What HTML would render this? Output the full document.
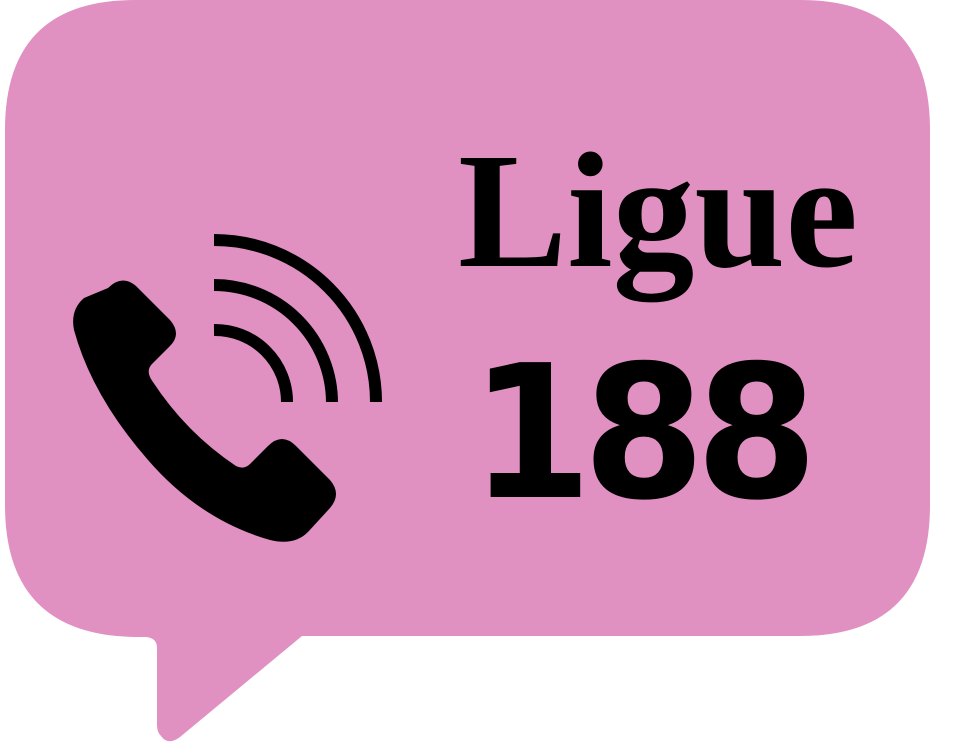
<!DOCTYPE html>
<html><head><meta charset="utf-8"><style>
html,body{margin:0;padding:0;background:#fff;width:956px;height:743px;overflow:hidden;position:relative}
svg{position:absolute;left:0;top:0}
.n{position:absolute;left:470px;top:323px;height:220px;font-family:"DejaVu Sans",sans-serif;font-weight:700;font-size:185px;line-height:220px;letter-spacing:-10px;color:#000;white-space:nowrap;transform:scaleX(0.95);transform-origin:0 0}
</style></head><body>
<svg width="956" height="743" viewBox="0 0 956 743" xmlns="http://www.w3.org/2000/svg">
<path fill="#e190c2" d="M135,0 H800 Q930,0 930,130 V505 Q930,636 800,636 H302 L180,737 Q168,746 161,736 Q157,732 157,725 V648 Q157,638 146,637 H135 Q5,635 5,505 V130 Q5,0 135,0 Z"/>
<path fill="#000" d="M108,288 Q122,274 136,286 L170,320 Q182,334 170,346 L152,364 Q146,370 151,379 Q185,432 236,466 Q244,470 250,464 L268,446 Q282,432 296,446 L330,480 Q342,494 330,508 L308,532 Q294,546 270,540 Q200,520 148,460 Q92,396 74,330 Q70,310 84,298 Z"/>
<g fill="none" stroke="#000" stroke-width="12">
<path d="M214,330 A72,72 0 0 1 287,402"/>
<path d="M214,285 A118,118 0 0 1 332,402"/>
<path d="M214,240 A162,162 0 0 1 376,402"/>
</g>
<text x="458" y="266" style="font-family:'Liberation Serif',serif;font-weight:bold" font-size="165" textLength="400" lengthAdjust="spacingAndGlyphs">Ligue</text>
</svg>
<div class="n">188</div>
</body></html>
